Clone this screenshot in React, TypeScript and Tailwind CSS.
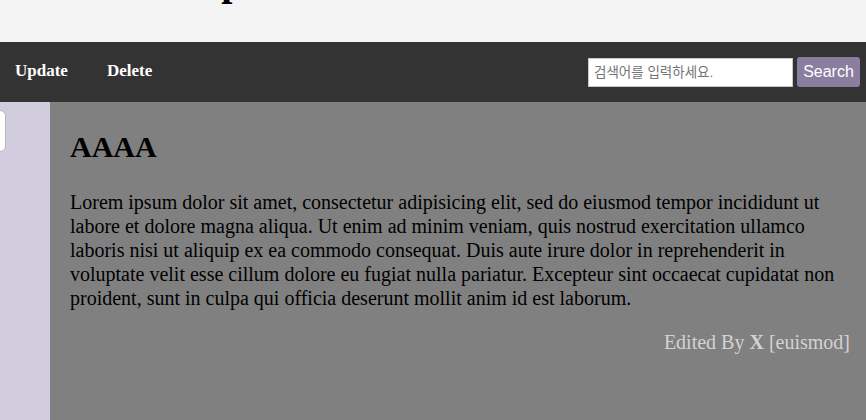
export default function App() {
  return (
    <div className="min-h-[420px] w-full bg-[#808080] font-['Liberation_Serif',serif]">
      {/* title strip, scrolled so only the descender shows */}
      <header className="h-[42px] overflow-hidden bg-[#f4f4f4]">
        <h1 className="-mt-[38px] pl-[80px] text-[40px] leading-none font-bold text-black">The Shop</h1>
      </header>

      <nav className="flex h-[60px] items-center justify-between bg-[#333333]">
        <div className="mb-[2px] ml-[15px] flex gap-[39px] text-[17px] font-bold text-white">
          <a href="#">Update</a>
          <a href="#">Delete</a>
        </div>
        <form className="mr-[6px] flex items-center gap-[4px]" onSubmit={(e) => e.preventDefault()}>
          <input
            type="text"
            placeholder="검색어를 입력하세요."
            className="h-[29px] w-[205px] border border-[#c8c8c8] bg-white px-[5px] font-['Liberation_Sans','Noto_Sans_CJK_KR',sans-serif] text-[13.5px] text-black outline-none placeholder:text-[#757575]"
          />
          <button className="h-[30px] w-[63px] rounded-[3px] bg-[#8a7ea0] font-['Liberation_Sans',sans-serif] text-[16px] text-white">
            Search
          </button>
        </form>
      </nav>

      <div className="flex min-h-[318px]">
        <aside className="w-[50px] shrink-0 bg-[#d1cddf] pt-[8px]">
          <div className="-ml-[40px] h-[42px] w-[46px] rounded-[6px] border border-[#b9b9b9] bg-white" />
        </aside>
        <main className="flex-1 px-[20px] pt-[28px] text-black">
          <h2 className="text-[30px] leading-[34px] font-bold">AAAA</h2>
          <p className="mt-[26px] text-[20px] leading-[24px]">
            Lorem ipsum dolor sit amet, consectetur adipisicing elit, sed do eiusmod tempor incididunt ut labore et
            dolore magna aliqua. Ut enim ad minim veniam, quis nostrud exercitation ullamco laboris nisi ut aliquip ex
            ea commodo consequat. Duis aute irure dolor in reprehenderit in voluptate velit esse cillum dolore eu
            fugiat nulla pariatur. Excepteur sint occaecat cupidatat non proident, sunt in culpa qui officia deserunt
            mollit anim id est laborum.
          </p>
          <p className="-mr-[4px] mt-[20px] text-right text-[20px] leading-[24px] text-[#d3d3d3]">
            Edited By <b>X</b> [euismod]
          </p>
        </main>
      </div>
    </div>
  );
}
